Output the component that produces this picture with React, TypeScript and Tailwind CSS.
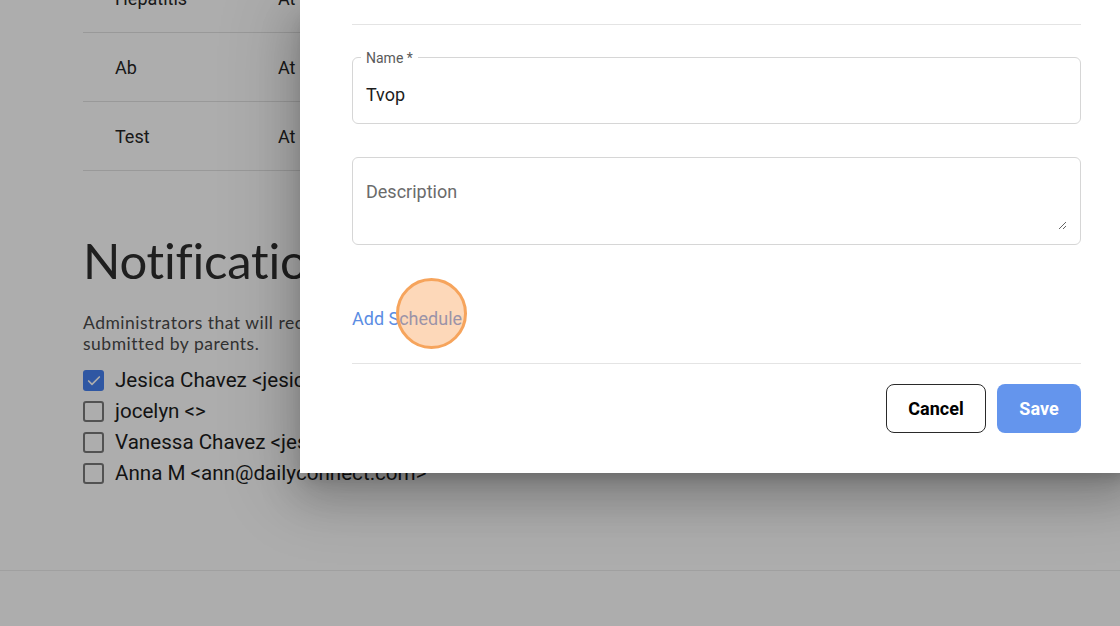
import { Check } from "lucide-react";

const rows = ["Hepatitis", "Ab", "Test"];

const admins = [
  { name: "Jesica Chavez <jesica@dailyconnect.com>", checked: true },
  { name: "jocelyn <>", checked: false },
  { name: "Vanessa Chavez <jessica@dailyconnect.com>", checked: false },
  { name: "Anna M <ann@dailyconnect.com>", checked: false },
];

function Page() {
  return (
    <div className="h-[626px] bg-white flex flex-col">
      <div className="pl-[83px] pr-[40px] flex-1">
        <div className="mt-[-36px] font-['Roboto',sans-serif]">
          {rows.map((r) => (
            <div key={r} className="h-[69px] flex items-center border-b border-[#e2e2e2] text-[18px] text-[#262626]">
              <div className="w-[195px] pl-[32px]">{r}</div>
              <div>At registration</div>
            </div>
          ))}
        </div>
        <h2 className="mt-[60px] text-[49px] leading-[58px] text-[#2f2f2f] font-['Lato',sans-serif] tracking-[-0.2px]">
          Notification Recipients
        </h2>
        <p className="mt-[23px] text-[17.5px] leading-[21px] text-[#4a4a4a] font-['Lato',sans-serif] tracking-[0.5px]">
          Administrators that will receive an email notification when forms are
          <br />
          submitted by parents.
        </p>
        <div className="mt-[11px] flex flex-col font-['Roboto',sans-serif]">
          {admins.map((a) => (
            <div key={a.name} className="h-[31px] flex items-center gap-[11px] text-[20.6px] text-[#1c1c1c]">
              {a.checked ? (
                <span className="w-[21px] h-[21px] rounded-[3px] bg-[#4680f0] flex items-center justify-center">
                  <Check size={16} strokeWidth={2.5} className="text-white" />
                </span>
              ) : (
                <span className="w-[21px] h-[21px] rounded-[3px] border-[2.5px] border-[#7a7a7a]" />
              )}
              <span>{a.name}</span>
            </div>
          ))}
        </div>
      </div>
      <div className="h-[56px] border-t border-[#ececec]" />
    </div>
  );
}

function Modal() {
  return (
    <div className="absolute left-[300px] top-0 w-[833px] h-[473px] bg-white px-[52px] font-['Roboto',sans-serif] shadow-[0_24px_38px_3px_rgba(0,0,0,0.16),0_9px_70px_12px_rgba(0,0,0,0.16),0_11px_15px_-7px_rgba(0,0,0,0.2)]">
      <div className="h-[25px] border-b border-[#e4e4e4]" />
      <div className="relative mt-[32px] h-[67px] rounded-[6px] border border-[#d6d6d6] flex items-center px-[13px] pt-[7px]">
        <span className="absolute left-[8px] top-[-8px] bg-white px-[5px] text-[14px] leading-[16px] text-[#5a5a5a]">
          Name *
        </span>
        <span className="text-[18px] text-[#1d1d1d]">Tvop</span>
      </div>
      <div className="mt-[33px] h-[88px] rounded-[6px] border border-[#d6d6d6] pl-[13px] pr-[13px] pt-[22px] pb-[14px] flex">
        <textarea
          placeholder="Description"
          className="flex-1 resize-y outline-none text-[18px] leading-[24px] text-[#1d1d1d] placeholder:text-[#6b6b6b] font-['Roboto',sans-serif]"
        />
      </div>
      <div className="relative h-[119px] border-b border-[#e4e4e4] flex items-center">
        <span className="text-[18px] text-[#5b8de3] mt-[29px]">Add Schedule</span>
        <span className="absolute left-[44px] top-[33px] w-[71px] h-[71px] rounded-full bg-[#fb9d50]/40 border-[3px] border-[#f6a45c]" />
      </div>
      <div className="mt-[20px] flex justify-end gap-[11px]">
        <button className="w-[100px] h-[49px] rounded-[8px] border-[1.5px] border-[#2a2a2a] text-[18px] font-bold text-black">
          Cancel
        </button>
        <button className="w-[84px] h-[49px] rounded-[8px] bg-[#6495ed] text-[18px] font-bold text-white">
          Save
        </button>
      </div>
    </div>
  );
}

export default function App() {
  return (
    <div className="relative w-[1120px] h-[626px] overflow-hidden">
      <Page />
      <div className="absolute inset-0 bg-black/[0.32]" />
      <Modal />
    </div>
  );
}
